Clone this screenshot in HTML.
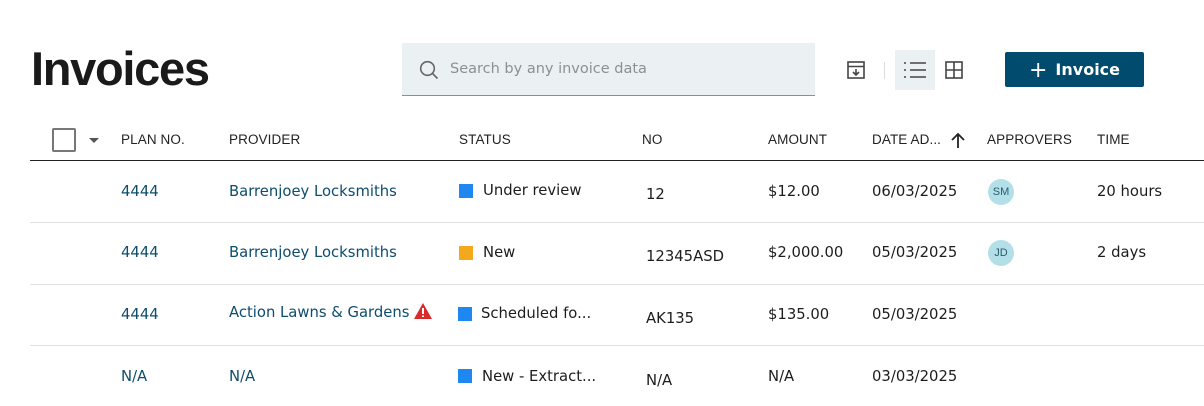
<!DOCTYPE html>
<html><head><style>
*{margin:0;padding:0;box-sizing:border-box}
body{width:1204px;height:406px;background:#fff;font-family:"Liberation Sans",sans-serif;position:relative;overflow:hidden;color:#1d1d1d}
.a{position:absolute;white-space:nowrap}
h1{position:absolute;left:31px;top:41px;font-size:47px;font-weight:bold;color:#1a1a1a;letter-spacing:-1.3px}
.search{position:absolute;left:402px;top:43px;width:413px;height:53px;background:#ebf0f3;border-bottom:1.5px solid #8a8f94}
.hd{font-size:13.5px;top:132px;color:#222;letter-spacing:0.1px}
.line{position:absolute;left:30px;right:0;height:1px}
.c{font-size:14.8px;font-family:"DejaVu Sans",sans-serif}
.lnk{color:#0e4d6e}
.sq{position:absolute;width:14px;height:14px}
.av{position:absolute;width:26px;height:26px;border-radius:50%;background:#b3e0e8;color:#2b5a6a;font-size:11px;text-align:center;line-height:26px}
</style></head><body>
<h1>Invoices</h1>
<div class="search">
<svg class="a" style="left:17px;top:17px" width="20" height="20" viewBox="0 0 20 20"><circle cx="8.5" cy="8.5" r="6.8" fill="none" stroke="#666" stroke-width="1.6"/><path d="M13.5 13.5L18.5 18.5" stroke="#666" stroke-width="1.6"/></svg>
<div class="a" style="left:48px;top:18px;color:#8b9096;font-family:'DejaVu Sans',sans-serif;font-size:14.5px">Search by any invoice data</div>
</div>
<svg class="a" style="left:847px;top:61px" width="18" height="18" viewBox="0 0 18 18" fill="none" stroke="#444" stroke-width="1.6"><rect x="1" y="1" width="16" height="16"/><path d="M1 5.5H17M9 8v6M6 11l3 3 3-3"/></svg>
<div class="a" style="left:884px;top:62px;width:1px;height:17px;background:#ddd"></div>
<div class="a" style="left:895px;top:50px;width:40px;height:40px;background:#ebf0f3"></div>
<svg class="a" style="left:904px;top:61px" width="22" height="18" viewBox="0 0 22 18" stroke="#444" stroke-width="1.6"><path d="M0 2h2M0 9h2M0 16h2M6 2h16M6 9h16M6 16h16"/></svg>
<svg class="a" style="left:945px;top:61px" width="18" height="18" viewBox="0 0 18 18" fill="none" stroke="#444" stroke-width="1.6"><rect x="1" y="1" width="16" height="16"/><path d="M9 1v16M1 9h16"/></svg>
<div class="a" style="left:1005px;top:52px;width:139px;height:35px;background:#004b6e;border-radius:2px;color:#fff;font-size:16px;font-weight:bold;line-height:36px;text-align:center;font-family:'DejaVu Sans',sans-serif"><span style="font-weight:normal;font-size:22px;vertical-align:-2px;margin-right:8px">+</span>Invoice</div>

<div class="a" style="left:52px;top:128px;width:24px;height:24px;border:2.5px solid #777;border-radius:2px"></div>
<div class="a" style="left:89px;top:138px;width:0;height:0;border-left:5px solid transparent;border-right:5px solid transparent;border-top:5px solid #555"></div>
<div class="a hd" style="left:121px">PLAN NO.</div>
<div class="a hd" style="left:229px">PROVIDER</div>
<div class="a hd" style="left:459px">STATUS</div>
<div class="a hd" style="left:642px">NO</div>
<div class="a hd" style="left:768px">AMOUNT</div>
<div class="a hd" style="left:872px">DATE AD...</div>
<svg class="a" style="left:951px;top:132px" width="14" height="16" viewBox="0 0 14 16" fill="none" stroke="#222" stroke-width="1.8"><path d="M7 16V2M1 8l6-6 6 6"/></svg>
<div class="a hd" style="left:987px">APPROVERS</div>
<div class="a hd" style="left:1097px">TIME</div>
<div class="line" style="top:160px;background:#222"></div>
<div class="line" style="top:222px;background:#e2e2e2"></div>
<div class="line" style="top:284px;background:#e2e2e2"></div>
<div class="line" style="top:345px;background:#e2e2e2"></div>

<div class="a c lnk" style="left:121px;top:183px">4444</div>
<div class="a c lnk" style="left:229px;top:183px">Barrenjoey Locksmiths</div>
<div class="sq" style="left:459px;top:184px;background:#1e88f0"></div>
<div class="a c" style="left:483px;top:182px">Under review</div>
<div class="a c" style="left:646px;top:186px">12</div>
<div class="a c" style="left:768px;top:183px">$12.00</div>
<div class="a c" style="left:872px;top:183px">06/03/2025</div>
<div class="av" style="left:988px;top:179px">SM</div>
<div class="a c" style="left:1097px;top:183px">20 hours</div>

<div class="a c lnk" style="left:121px;top:244px">4444</div>
<div class="a c lnk" style="left:229px;top:244px">Barrenjoey Locksmiths</div>
<div class="sq" style="left:459px;top:246px;background:#f5a81c"></div>
<div class="a c" style="left:483px;top:244px">New</div>
<div class="a c" style="left:646px;top:248px">12345ASD</div>
<div class="a c" style="left:768px;top:244px">$2,000.00</div>
<div class="a c" style="left:872px;top:244px">05/03/2025</div>
<div class="av" style="left:988px;top:240px">JD</div>
<div class="a c" style="left:1097px;top:244px">2 days</div>

<div class="a c lnk" style="left:121px;top:306px">4444</div>
<div class="a c lnk" style="left:229px;top:303px">Action Lawns &amp; Gardens <svg width="18" height="16" viewBox="0 0 18 16" style="vertical-align:-2px"><path d="M9 0L18 16H0Z" fill="#d92b2b"/><path d="M9 5v6M9 12.5v1.5" stroke="#fff" stroke-width="2"/></svg></div>
<div class="sq" style="left:458px;top:307px;background:#1e88f0"></div>
<div class="a c" style="left:481px;top:305px">Scheduled fo...</div>
<div class="a c" style="left:646px;top:310px">AK135</div>
<div class="a c" style="left:768px;top:306px">$135.00</div>
<div class="a c" style="left:872px;top:306px">05/03/2025</div>

<div class="a c lnk" style="left:121px;top:368px">N/A</div>
<div class="a c lnk" style="left:229px;top:368px">N/A</div>
<div class="sq" style="left:458px;top:369px;background:#1e88f0"></div>
<div class="a c" style="left:482px;top:368px">New - Extract...</div>
<div class="a c" style="left:646px;top:372px">N/A</div>
<div class="a c" style="left:768px;top:368px">N/A</div>
<div class="a c" style="left:872px;top:368px">03/03/2025</div>
</body></html>
